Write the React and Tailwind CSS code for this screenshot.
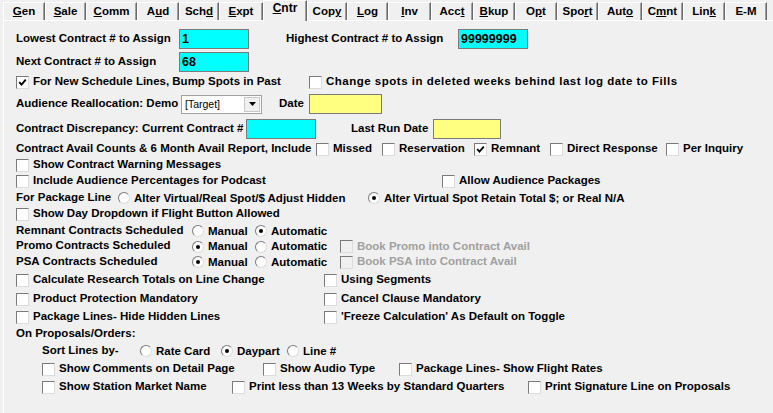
import React from "react";

function U({ children }) {
  return <span className="underline underline-offset-[1px]">{children}</span>;
}

function Tab({ children, w, sel }) {
  if (sel) {
    return (
      <div
        className={`${w} relative z-10 -mb-[1px] h-[21px] flex items-start justify-center pt-[1px] bg-[#f0f0f0] border-t border-l border-white border-r border-r-[#696969] shadow-[inset_-1px_0_0_#a0a0a0] text-[12px]`}
      >
        {children}
      </div>
    );
  }
  return (
    <div
      className={`${w} h-[18px] flex items-center justify-center pt-[1px] border-t border-l border-white border-r border-r-[#696969] shadow-[inset_-1px_0_0_#a0a0a0]`}
    >
      {children}
    </div>
  );
}

function Box({ checked, disabled }) {
  return (
    <span
      className={`w-[13px] h-[13px] shrink-0 flex items-center justify-center border border-t-[#7a7a7a] border-l-[#7a7a7a] border-r-[#dcdcdc] border-b-[#dcdcdc] ${
        disabled ? "bg-[#f0f0f0]" : "bg-white"
      }`}
    >
      {checked && (
        <svg width="9" height="9" viewBox="0 0 9 9">
          <path d="M1.2 4.2 L3.5 6.6 L7.8 1.6" stroke="black" strokeWidth="1.9" fill="none" />
        </svg>
      )}
    </span>
  );
}

function Chk({ checked, disabled, children, className = "", textClass = "" }) {
  return (
    <div className={`flex items-center gap-[4px] shrink-0 ${className}`}>
      <Box checked={checked} disabled={disabled} />
      <span className={`${disabled ? "text-[#a0a0a0]" : ""} ${textClass}`}>{children}</span>
    </div>
  );
}

function Radio({ on, children, className = "" }) {
  return (
    <div className={`flex items-center gap-[4px] shrink-0 ${className}`}>
      <span className="w-[12px] h-[12px] shrink-0 rounded-full bg-white border border-t-[#7a7a7a] border-l-[#7a7a7a] border-r-[#dcdcdc] border-b-[#dcdcdc] flex items-center justify-center">
        {on && <span className="w-[4px] h-[4px] rounded-full bg-black" />}
      </span>
      <span className="mt-[1px]">{children}</span>
    </div>
  );
}

function Field({ className, children }) {
  return (
    <div
      className={`${className} h-[20px] shrink-0 border border-[#7a7a7a] flex items-center pl-[2px] text-[12.5px] leading-none`}
    >
      {children}
    </div>
  );
}

export default function App() {
  return (
    <div className="w-[773px] h-[413px] overflow-hidden bg-[#f0f0f0] text-black font-bold text-[11.5px] leading-none font-['Liberation_Sans',Arial,sans-serif]">
      {/* Tabs */}
      <div className="h-[20px] flex items-end pl-[3px]">
        <Tab w="w-[42px]"><U>G</U>en</Tab>
        <Tab w="w-[41px]"><U>S</U>ale</Tab>
        <Tab w="w-[51px]"><U>C</U>omm</Tab>
        <Tab w="w-[42px]">A<U>u</U>d</Tab>
        <Tab w="w-[40px]">Sch<U>d</U></Tab>
        <Tab w="w-[44px]"><U>E</U>xpt</Tab>
        <Tab w="w-[44px]" sel><U>C</U>ntr</Tab>
        <Tab w="w-[40px]">Cop<U>y</U></Tab>
        <Tab w="w-[41px]"><U>L</U>og</Tab>
        <Tab w="w-[43px]"><U>I</U>nv</Tab>
        <Tab w="w-[42px]">Acc<U>t</U></Tab>
        <Tab w="w-[42px]"><U>B</U>kup</Tab>
        <Tab w="w-[42px]">O<U>p</U>t</Tab>
        <Tab w="w-[41px]">Spo<U>r</U>t</Tab>
        <Tab w="w-[44px]">Aut<U>o</U></Tab>
        <Tab w="w-[41px]">C<U>m</U>nt</Tab>
        <Tab w="w-[42px]">Lin<U>k</U></Tab>
        <Tab w="w-[42px]">E-M</Tab>
      </div>

      {/* Panel */}
      <div className="ml-[3px] h-[393px] border-t border-l border-white flex flex-col">
        {/* Row 1 */}
        <div className="mt-[8px] h-[20px] flex items-center pl-[12px]">
          <span className="w-[163px] shrink-0">Lowest Contract # to Assign</span>
          <Field className="w-[70px] bg-[#00ffff]">1</Field>
          <span className="ml-[37px] w-[172px] shrink-0">Highest Contract # to Assign</span>
          <Field className="w-[70px] bg-[#00ffff]">99999999</Field>
        </div>
        {/* Row 2 */}
        <div className="mt-[3px] h-[20px] flex items-center pl-[12px]">
          <span className="w-[163px] shrink-0">Next Contract # to Assign</span>
          <Field className="w-[70px] bg-[#00ffff]">68</Field>
        </div>
        {/* Row 3 */}
        <div className="mt-[2px] h-[16px] flex items-center pl-[12px]">
          <Chk checked className="w-[293px]">For New Schedule Lines, Bump Spots in Past</Chk>
          <Chk textClass="tracking-[0.5px]">Change spots in deleted weeks behind last log date to Fills</Chk>
        </div>
        {/* Row 4 */}
        <div className="mt-[4px] h-[20px] flex items-center pl-[12px]">
          <span className="w-[165px] shrink-0">Audience Reallocation: Demo</span>
          <div className="w-[81px] h-[19px] shrink-0 bg-white border border-[#a0a0a0] flex items-stretch">
            <span className="flex-1 pl-[3px] pt-[2px] font-normal text-[10.5px] leading-[13px]">[Target]</span>
            <span className="w-[16px] m-[1px] bg-[#f0f0f0] border border-[#c8c8c8] flex items-center justify-center">
              <svg width="7" height="4" viewBox="0 0 7 4">
                <path d="M0 0 H7 L3.5 4 Z" fill="black" />
              </svg>
            </span>
          </div>
          <span className="ml-[17px] w-[30px] shrink-0">Date</span>
          <Field className="w-[73px] bg-[#ffff80]"></Field>
        </div>
        {/* Row 5 */}
        <div className="mt-[5px] h-[20px] flex items-center pl-[12px]">
          <span className="w-[230px] shrink-0">Contract Discrepancy: Current Contract #</span>
          <Field className="w-[70px] bg-[#00ffff]"></Field>
          <span className="ml-[35px] w-[82px] shrink-0">Last Run Date</span>
          <Field className="w-[68px] bg-[#ffff80]"></Field>
        </div>
        {/* Row 6 */}
        <div className="mt-[2px] h-[16px] flex items-center pl-[12px]">
          <span className="w-[300px] shrink-0">Contract Avail Counts &amp; 6 Month Avail Report, Include</span>
          <Chk className="w-[66px]">Missed</Chk>
          <Chk className="w-[92px]">Reservation</Chk>
          <Chk checked className="w-[76px]">Remnant</Chk>
          <Chk className="w-[116px]">Direct Response</Chk>
          <Chk>Per Inquiry</Chk>
        </div>
        {/* Row 7 */}
        <div className="h-[16px] flex items-center pl-[12px]">
          <Chk>Show Contract Warning Messages</Chk>
        </div>
        {/* Row 8 */}
        <div className="h-[16px] flex items-center pl-[12px]">
          <Chk className="w-[426px]">Include Audience Percentages for Podcast</Chk>
          <Chk>Allow Audience Packages</Chk>
        </div>
        {/* Row 9 */}
        <div className="mt-[1px] h-[16px] flex items-center pl-[12px]">
          <span className="w-[102px] shrink-0">For Package Line</span>
          <Radio className="w-[250px]">Alter Virtual/Real Spot/$ Adjust Hidden</Radio>
          <Radio on>Alter Virtual Spot Retain Total $; or Real N/A</Radio>
        </div>
        {/* Row 10 */}
        <div className="h-[16px] flex items-center pl-[12px]">
          <Chk>Show Day Dropdown if Flight Button Allowed</Chk>
        </div>
        {/* Row 11 */}
        <div className="mt-[1px] h-[16px] flex items-center pl-[12px]">
          <span className="w-[176px] shrink-0 -mt-[1px]">Remnant Contracts Scheduled</span>
          <Radio className="w-[63px]">Manual</Radio>
          <Radio on className="w-[85px]">Automatic</Radio>
        </div>
        {/* Row 12 */}
        <div className="h-[15px] flex items-center pl-[12px]">
          <span className="w-[176px] shrink-0 -mt-[1px]">Promo Contracts Scheduled</span>
          <Radio on className="w-[63px]">Manual</Radio>
          <Radio className="w-[85px]">Automatic</Radio>
          <Chk disabled>Book Promo into Contract Avail</Chk>
        </div>
        {/* Row 13 */}
        <div className="h-[16px] flex items-center pl-[12px]">
          <span className="w-[176px] shrink-0 -mt-[1px]">PSA Contracts Scheduled</span>
          <Radio on className="w-[63px]">Manual</Radio>
          <Radio className="w-[85px]">Automatic</Radio>
          <Chk disabled>Book PSA into Contract Avail</Chk>
        </div>
        {/* Row 14 */}
        <div className="mt-[1px] h-[18px] flex items-center pl-[12px]">
          <Chk className="w-[308px]">Calculate Research Totals on Line Change</Chk>
          <Chk>Using Segments</Chk>
        </div>
        {/* Row 15 */}
        <div className="mt-[1px] h-[18px] flex items-center pl-[12px]">
          <Chk className="w-[308px]">Product Protection Mandatory</Chk>
          <Chk>Cancel Clause Mandatory</Chk>
        </div>
        {/* Row 16 */}
        <div className="h-[18px] flex items-center pl-[12px]">
          <Chk className="w-[308px]">Package Lines- Hide Hidden Lines</Chk>
          <Chk>'Freeze Calculation' As Default on Toggle</Chk>
        </div>
        {/* Row 17 */}
        <div className="h-[16px] flex items-center pl-[12px]">
          <span>On Proposals/Orders:</span>
        </div>
        {/* Row 18 */}
        <div className="h-[18px] flex items-center pl-[38px]">
          <span className="w-[98px] shrink-0">Sort Lines by-</span>
          <Radio className="w-[81px]">Rate Card</Radio>
          <Radio on className="w-[66px]">Daypart</Radio>
          <Radio>Line #</Radio>
        </div>
        {/* Row 19 */}
        <div className="h-[18px] flex items-center pl-[38px]">
          <Chk className="w-[221px]">Show Comments on Detail Page</Chk>
          <Chk className="w-[136px]">Show Audio Type</Chk>
          <Chk>Package Lines- Show Flight Rates</Chk>
        </div>
        {/* Row 20 */}
        <div className="h-[18px] flex items-center pl-[38px]">
          <Chk className="w-[190px]">Show Station Market Name</Chk>
          <Chk className="w-[296px]">Print less than 13 Weeks by Standard Quarters</Chk>
          <Chk>Print Signature Line on Proposals</Chk>
        </div>
      </div>
    </div>
  );
}
